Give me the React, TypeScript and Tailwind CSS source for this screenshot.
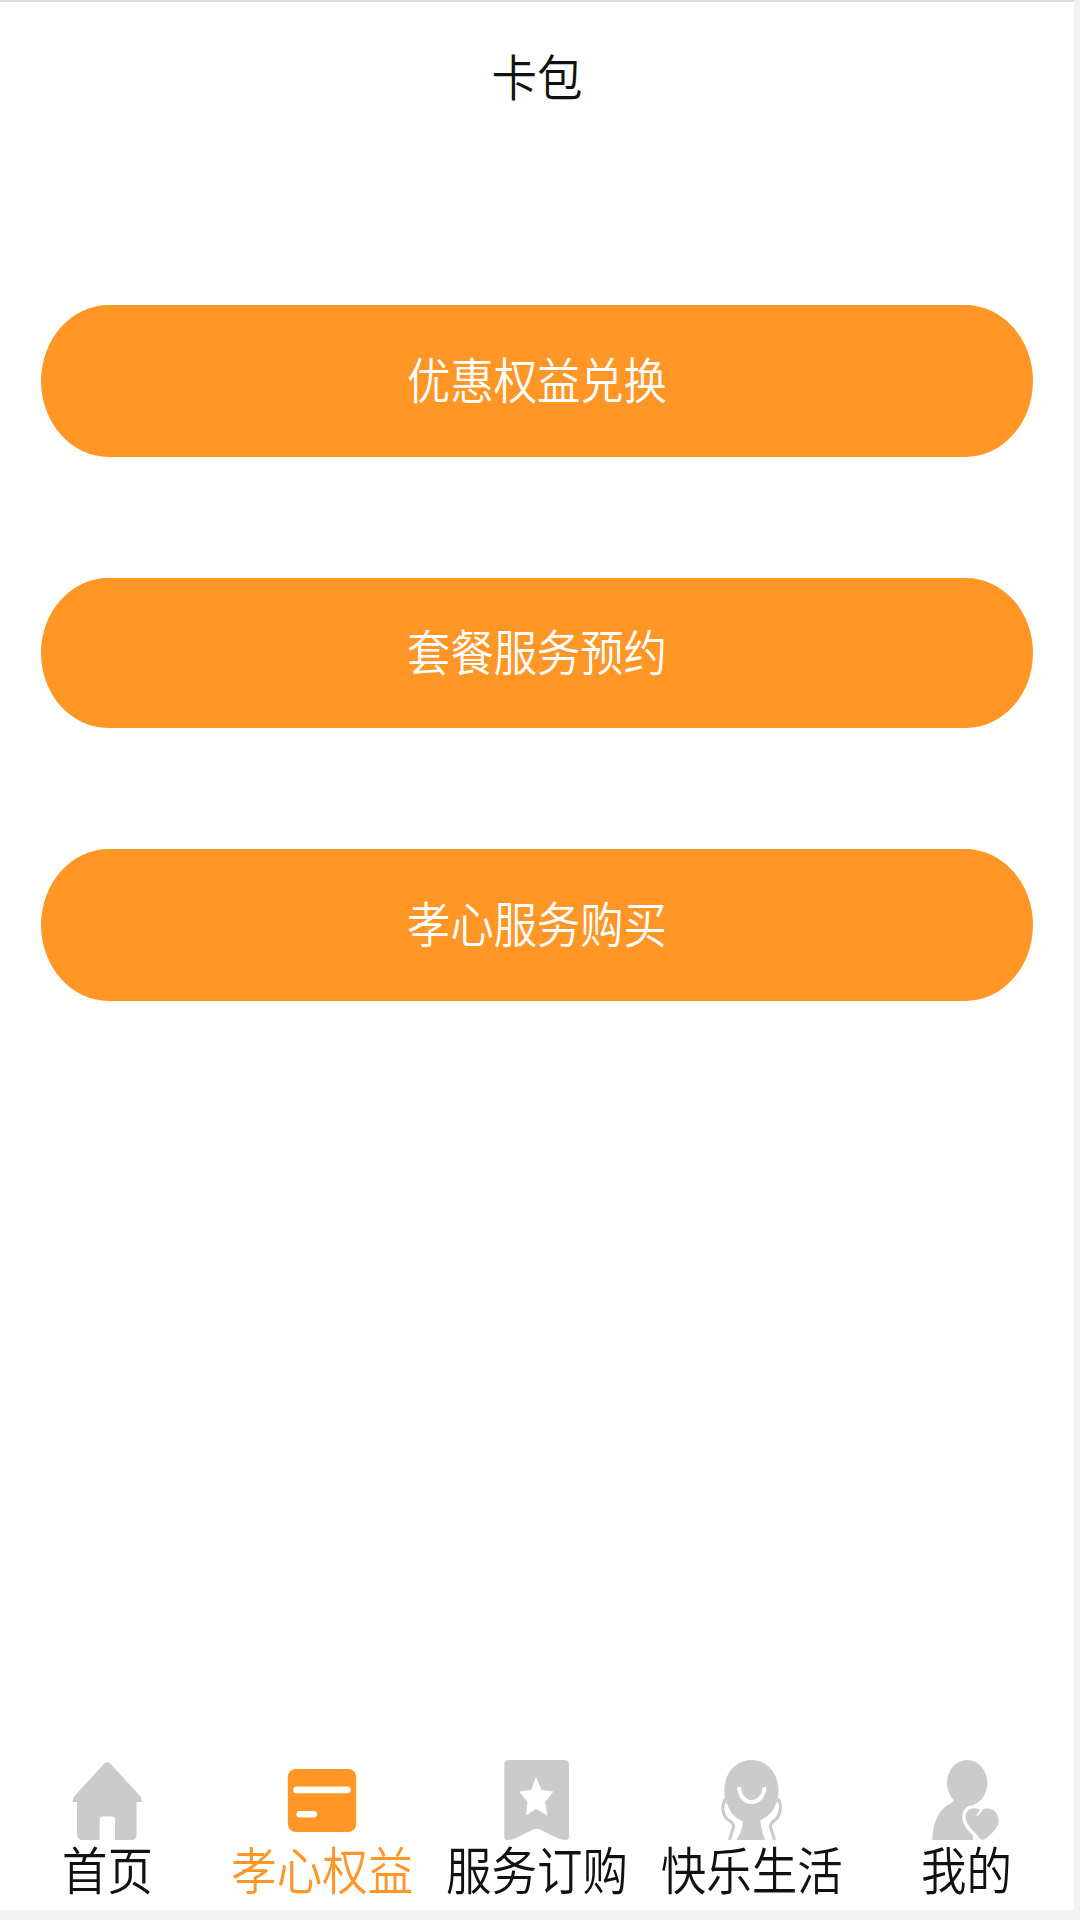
import { useState } from 'react';
import type { ReactNode } from 'react';

interface Tab {
  key: string;
  label: string;
  icon: ReactNode;
}

const actions = [
  { label: '优惠权益兑换', className: 'mt-[171px] h-[152px]' },
  { label: '套餐服务预约', className: 'mt-[121px] h-[150px]' },
  { label: '孝心服务购买', className: 'mt-[121px] h-[152px]' },
];

const tabs: Tab[] = [
  {
    key: 'home',
    label: '首页',
    icon: (
      <path d="M37.5 3.3Q40.3 1 43 3.3L73 36Q75 38.5 74.6 42H69.6V74Q69.6 80 64 80H48V60Q48 56.5 44.5 56.5H36Q32.6 56.5 32.6 60V80H16Q10 80 10 74V42H5.6Q5.2 38.5 7.5 36Z" />
    ),
  },
  {
    key: 'rights',
    label: '孝心权益',
    icon: (
      <>
        <rect x="5.8" y="9" width="68.4" height="63" rx="8" />
        <rect x="11.3" y="26.6" width="57.4" height="6.6" rx="3" fill="#fff" />
        <rect x="14.5" y="51" width="20.5" height="6.6" rx="3" fill="#fff" />
      </>
    ),
  },
  {
    key: 'order',
    label: '服务订购',
    icon: (
      <>
        <path d="M12 0H67Q72 0 72 5V77Q72 80 69 80Q64 80 60 78L44 70Q39.5 67.5 35 70L19 78Q15 80 10 80Q7.3 80 7.3 77V5Q7.3 0 12 0Z" />
        <path
          d="M39 17L44.5 30L56.5 31.5L48 42L50.5 55.5L39 49L29 55.5L30.5 42L22.3 31.5L34 30Z"
          fill="#fff"
        />
      </>
    ),
  },
  {
    key: 'life',
    label: '快乐生活',
    icon: (
      <>
        <path d="M39.3 0C55 0 66.5 13 66.5 31C66.5 45 60 56 48.2 60Q49 70 53.2 80H24.2Q30.5 71 30.9 61.5C18 56 12.2 45 12.2 31C12.2 13 24 0 39.3 0Z" />
        <path d="M27.2 27C27.5 36 32.5 42 39.7 42S52 36 52.5 27" fill="none" stroke="#fff" strokeWidth="4" />
        <path d="M14 44Q17 56 29 62M65 44Q62 55 50 61" fill="none" stroke="#fff" strokeWidth="2.5" />
        <path
          d="M13.5 39C9 45 10.5 54 15 59Q22.5 63.5 21.5 67L17.5 80M66 39C70 45 69 53 64.5 59Q57.5 63.5 58.5 67L62.5 80"
          fill="none"
          stroke="currentColor"
          strokeWidth="3.2"
        />
      </>
    ),
  },
  {
    key: 'mine',
    label: '我的',
    icon: (
      <>
        <ellipse cx="40.2" cy="23" rx="20.2" ry="23" />
        <path d="M5.4 80C5.4 62 12 48 25 42.7L28 38H46V80Z" />
        <path
          d="M53 78.5L43 67.5C35 57 39 48.5 47 48.3Q51 48 54 50.5C61 45.5 71.7 50 71.7 61C71.7 65 69 69 66 72L59 78.5Q56 81 53 78.5Z"
          stroke="#fff"
          strokeWidth="6.5"
          strokeLinejoin="round"
          paintOrder="stroke"
        />
        <path d="M50 55.5L54.5 50" stroke="#fff" strokeWidth="1.8" />
      </>
    ),
  },
];

export default function App() {
  const [active, setActive] = useState('rights');

  return (
    <div className="h-[1920px] w-[1080px] overflow-hidden bg-[#f1f2f4] font-['Noto_Sans_CJK_SC',sans-serif] font-[350]">
      <div className="flex h-[1910px] w-[1074px] flex-col border-t-2 border-[#dedede] bg-white">
        <h1 className="flex h-[132px] items-center justify-center pt-[13px] text-[45.5px] leading-none text-[#111]">
          <span className="scale-y-108">卡包</span>
        </h1>

        <main className="flex flex-1 flex-col pr-[41px] pl-[41px]">
          {actions.map((action) => (
            <button
              key={action.label}
              className={`${action.className} flex w-full shrink-0 items-center justify-center rounded-[68px/76px] bg-[#ff9626] pb-[4px] text-[43.3px] leading-none text-white`}
            >
              <span className="scale-y-112">{action.label}</span>
            </button>
          ))}
        </main>

        {/* Bottom tab bar */}
        <nav className="grid h-[150px] grid-cols-5">
          {tabs.map((tab) => (
            <button
              key={tab.key}
              onClick={() => setActive(tab.key)}
              className="flex flex-col items-center"
            >
              <svg
                viewBox="0 0 80 80"
                fill="currentColor"
                className={`size-[80px] shrink-0 ${active === tab.key ? 'text-[#ff9626]' : 'text-[#cbcbcb]'}`}
              >
                {tab.icon}
              </svg>
              <span
                className={`mt-[6px] scale-y-112 text-[45.5px] leading-none whitespace-nowrap ${active === tab.key ? 'text-[#ff9626]' : 'text-[#111]'}`}
              >
                {tab.label}
              </span>
            </button>
          ))}
        </nav>
      </div>
    </div>
  );
}
